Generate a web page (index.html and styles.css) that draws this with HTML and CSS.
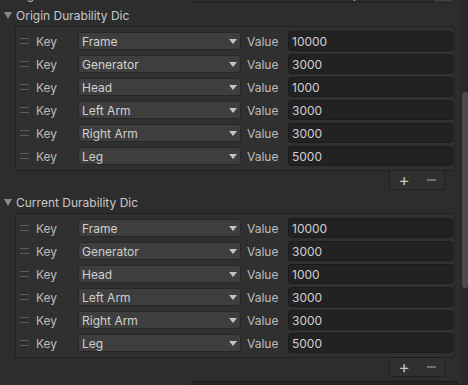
FILE: index.html
```html
<!DOCTYPE html>
<html lang="en">
<head>
    <meta charset="UTF-8">
    <meta name="viewport" content="width=device-width, initial-scale=1.0">
    <title>Inspector</title>
    <link rel="stylesheet" href="styles.css">
</head>
<body>
    <div class="panel">
        <div class="content">
            <div class="prop-row">
                <span class="prop-label">Right Gun Point</span>
                <div class="object-field">
                    <span class="obj-icon"></span>
                    <span class="obj-text">GunController (Transform)</span>
                    <span class="obj-pick"></span>
                </div>
            </div>

            <div class="foldout"><span class="tri"></span>Origin Durability Dic</div>
            <div class="list" id="origin"></div>
            <div class="footer"><span class="plus">+</span><span class="minus"></span></div>

            <div class="foldout second"><span class="tri"></span>Current Durability Dic</div>
            <div class="list" id="current"></div>
            <div class="footer"><span class="plus">+</span><span class="minus"></span></div>

            <div class="next-field"></div>
        </div>
        <div class="scrollbar"><div class="thumb"></div></div>
    </div>

    <script>
        const entries = [
            ["Frame", "10000"],
            ["Generator", "3000"],
            ["Head", "1000"],
            ["Left Arm", "3000"],
            ["Right Arm", "3000"],
            ["Leg", "5000"]
        ];

        function renderList(el) {
            el.innerHTML = entries.map(([key, value]) => `
                <div class="row">
                    <span class="handle"></span>
                    <span class="label key">Key</span>
                    <div class="dropdown"><span>${key}</span><span class="arrow"></span></div>
                    <span class="label value">Value</span>
                    <div class="field">${value}</div>
                </div>
            `).join('');
        }

        renderList(document.getElementById('origin'));
        renderList(document.getElementById('current'));
    </script>
</body>
</html>
```

FILE: styles.css
```css
body {
    margin: 0;
    background: #2d2d2d;
    font-family: Inter, "Noto Sans", sans-serif;
    font-size: 12px;
    color: #c4c4c4;
}

.panel {
    display: flex;
    width: 468px;
    height: 385px;
    overflow: hidden;
}

.content {
    width: 460px;
}

.prop-row {
    display: flex;
    align-items: center;
    height: 18px;
    margin-top: -15px;
    padding-left: 16px;
}

.prop-label {
    width: 175px;
}

.object-field {
    display: flex;
    align-items: center;
    width: 262px;
    height: 18px;
    box-sizing: border-box;
    background: #2a2a2a;
    border: 1px solid #212121;
    border-radius: 3px;
    padding-left: 4px;
}

.obj-icon {
    width: 9px;
    height: 9px;
    background: linear-gradient(90deg, #4a8fd8 50%, #d65a3a 50%);
    margin-right: 3px;
}

.obj-text {
    flex: 1;
}

.obj-pick {
    width: 18px;
    height: 16px;
    background: #3a3a3a;
}

.foldout {
    display: flex;
    align-items: center;
    height: 16px;
    margin-top: 4px;
    color: #c8c8c8;
}

.foldout.second {
    margin-top: 4px;
}

.tri {
    width: 0;
    height: 0;
    margin: 0 4px 0 4px;
    border-left: 4px solid transparent;
    border-right: 4px solid transparent;
    border-top: 7px solid #8a8a8a;
}

.list {
    margin: 3px 0 0 15px;
    width: 440px;
    box-sizing: border-box;
    background: #303030;
    border: 1px solid #212121;
    border-radius: 3px;
    padding: 4px 1px 4px 4px;
    display: flex;
    flex-direction: column;
    gap: 3px;
}

.row {
    display: flex;
    align-items: center;
    height: 20px;
}

.handle {
    width: 9px;
    height: 4px;
    border-top: 1px solid #5c5c5c;
    border-bottom: 1px solid #5c5c5c;
    margin-right: 7px;
}

.label {
    color: #bcbcbc;
}

.key {
    width: 42px;
}

.value {
    width: 41px;
    margin-left: 6px;
}

.dropdown {
    display: flex;
    align-items: center;
    justify-content: space-between;
    width: 163px;
    height: 18px;
    box-sizing: border-box;
    background: #3e3e3e;
    border: 1px solid #262626;
    border-radius: 3px;
    padding: 0 3px 0 3px;
    color: #d0d0d0;
}

.arrow {
    width: 0;
    height: 0;
    border-left: 4px solid transparent;
    border-right: 4px solid transparent;
    border-top: 5px solid #c4c4c4;
}

.field {
    display: flex;
    align-items: center;
    width: 165px;
    height: 20px;
    box-sizing: border-box;
    background: #222222;
    border: 1px solid #1b1b1b;
    border-radius: 3px;
    padding-left: 3px;
    color: #d0d0d0;
}

.footer {
    display: flex;
    align-items: center;
    justify-content: space-around;
    width: 56px;
    height: 19px;
    box-sizing: border-box;
    margin-left: 389px;
    background: #303030;
    border: 1px solid #212121;
    border-top: 0;
    border-radius: 0 0 3px 3px;
}

.plus {
    font-size: 17px;
    line-height: 1;
    color: #c4c4c4;
}

.minus {
    width: 9px;
    height: 2px;
    background: #707070;
}

.next-field {
    margin: 4px 0 0 191px;
    width: 265px;
    height: 18px;
    background: #262626;
    border: 1px solid #181818;
    border-radius: 3px;
}

.scrollbar {
    width: 8px;
    background: #292929;
}

.thumb {
    margin: 92px 0 0 2px;
    width: 6px;
    height: 196px;
    border-radius: 3px;
    background: #4a4a4a;
}
```
